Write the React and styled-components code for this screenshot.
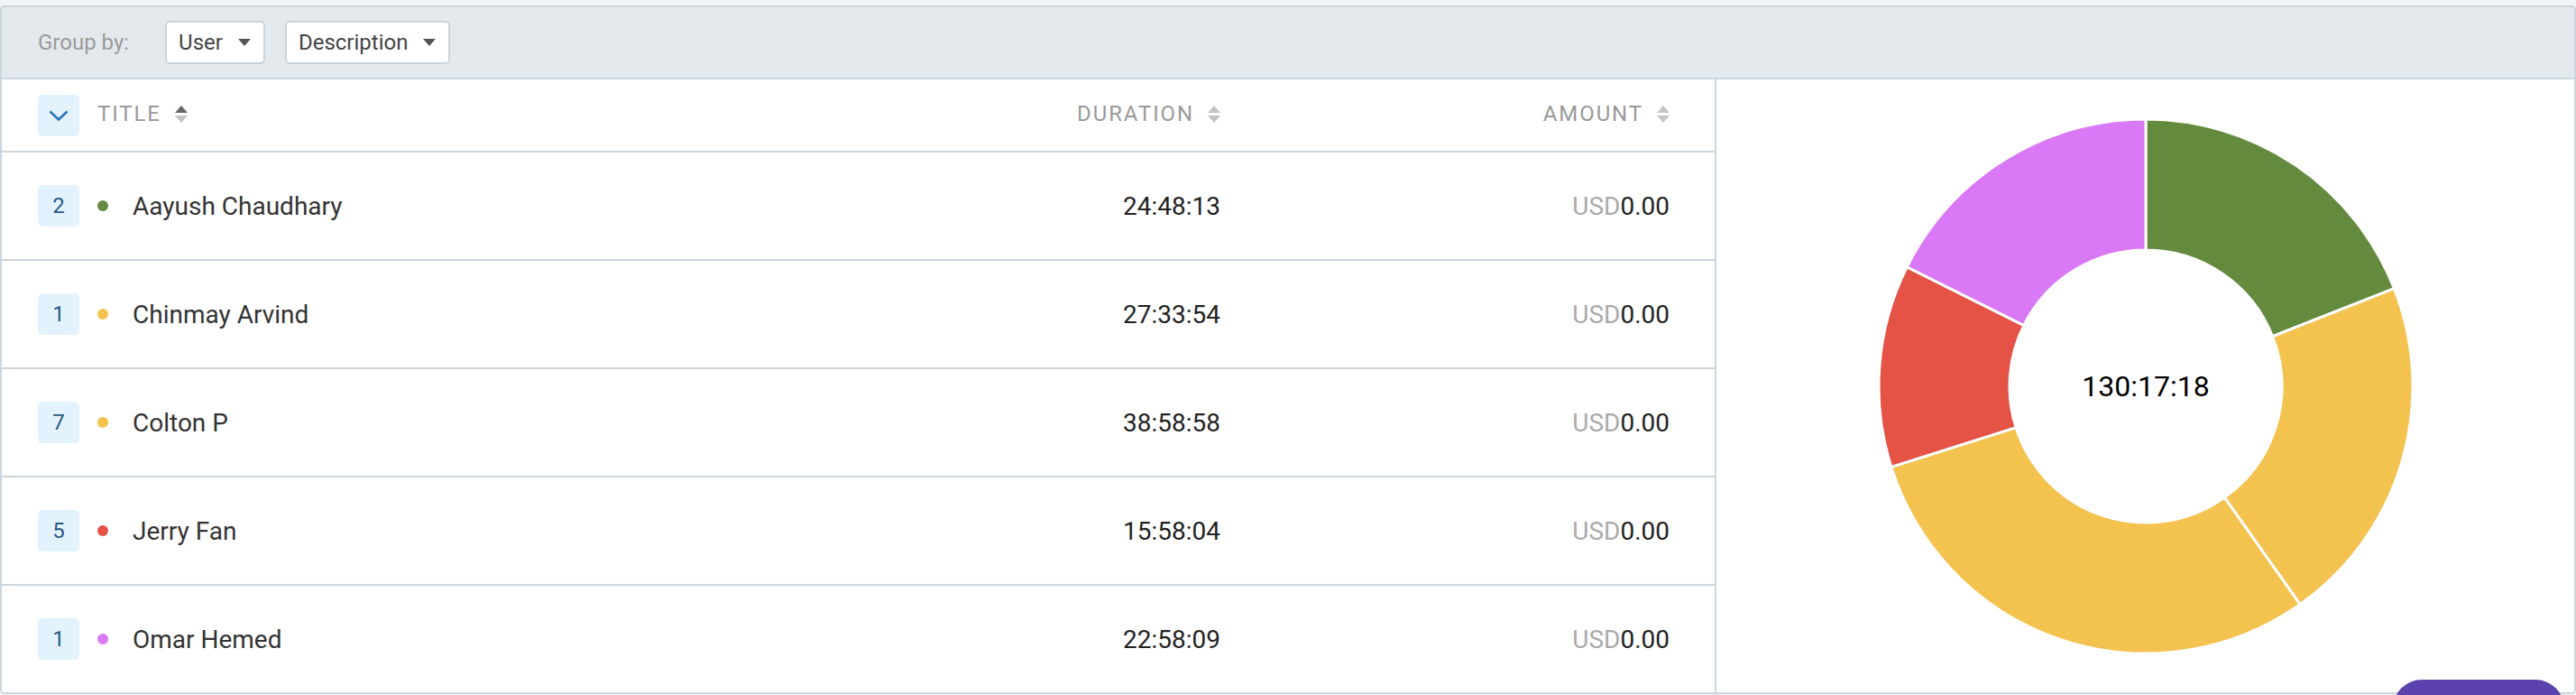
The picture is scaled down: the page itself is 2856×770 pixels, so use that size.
import React from "react";
import styled, { createGlobalStyle } from "styled-components";

const Global = createGlobalStyle`
  html, body { margin: 0; padding: 0; }
  body {
    background: #f2f5f8;
    font-family: Roboto, "Noto Sans", "Liberation Sans", sans-serif;
    padding-top: 6px;
    overflow: hidden;
  }
  * { box-sizing: border-box; }
`;

const Card = styled.div`
  border: 2px solid #cbd5dd;
  border-radius: 5px;
  background: #fff;
  overflow: hidden;
`;

const Toolbar = styled.div`
  height: 80px;
  background: #e4e9ed;
  border-bottom: 2px solid #cbd5dd;
  display: flex;
  align-items: center;
  padding-left: 40px;
`;

const ToolbarLabel = styled.span`
  font-size: 24px;
  color: #9a9a9a;
  margin-right: 40px;
`;

const Dropdown = styled.div`
  height: 48px;
  display: flex;
  align-items: center;
  gap: 17px;
  padding: 0 14px 0 13px;
  background: #fff;
  border: 2px solid #c9d3db;
  border-radius: 5px;
  font-size: 24px;
  color: #444;
  margin-right: 22px;
`;

const Caret = styled.span`
  width: 0;
  height: 0;
  border-left: 7px solid transparent;
  border-right: 7px solid transparent;
  border-top: 8px solid #555;
`;

const Body = styled.div`
  display: flex;
`;

const TablePanel = styled.div`
  width: 1901px;
  flex: none;
  border-right: 2px solid #cbd5dd;
`;

const Row = styled.div`
  display: grid;
  grid-template-columns: 1fr 420px 498px;
  align-items: center;
  padding: 0 50px 0 40px;
  height: ${(p) => (p.$header ? "79px" : "118px")};
  border-bottom: ${(p) => (p.$last ? "none" : "2px solid #cbd5dd")};
  box-sizing: content-box;
`;

const TitleCell = styled.div`
  display: flex;
  align-items: center;
`;

const NumCell = styled.div`
  display: flex;
  align-items: center;
  justify-content: flex-end;
  font-size: 28px;
  color: #222;
`;

const HeadText = styled.span`
  font-size: 24px;
  letter-spacing: 1.9px;
  color: #999;
  text-transform: uppercase;
  margin-bottom: 3px;
`;

const SortIcon = styled.span`
  display: inline-flex;
  flex-direction: column;
  gap: 3px;
  margin-left: 15px;
  margin-bottom: 3px;
  &::before, &::after {
    content: "";
    width: 0;
    height: 0;
    border-left: 7px solid transparent;
    border-right: 7px solid transparent;
  }
  &::before {
    border-bottom: 8px solid ${(p) => (p.$active ? "#666" : "#c4c4c4")};
  }
  &::after {
    border-top: 8px solid #c4c4c4;
  }
`;

const CollapseBtn = styled.div`
  width: 46px;
  height: 46px;
  border-radius: 5px;
  background: #e3f3fd;
  display: flex;
  align-items: center;
  justify-content: center;
  margin-right: 20px;
`;

const Badge = styled.div`
  width: 46px;
  height: 46px;
  border-radius: 5px;
  background: #e3f3fd;
  color: #2b5a85;
  font-size: 24px;
  display: flex;
  align-items: center;
  justify-content: center;
  margin-right: 20px;
`;

const Dot = styled.span`
  width: 12px;
  height: 12px;
  border-radius: 50%;
  background: ${(p) => p.$color};
  margin-right: 27px;
`;

const Name = styled.span`
  font-size: 28px;
  color: #333;
`;

const Currency = styled.span`
  color: #aaa;
`;

const ChartPanel = styled.div`
  flex: 1;
  display: flex;
  align-items: center;
  justify-content: center;
`;

const ChatButton = styled.div`
  position: fixed;
  right: 13px;
  bottom: -47px;
  width: 190px;
  height: 64px;
  border-radius: 32px;
  background: #5c42ae;
`;

const data = [
  { count: 2, name: "Aayush Chaudhary", duration: "24:48:13", color: "#648a3e" },
  { count: 1, name: "Chinmay Arvind", duration: "27:33:54", color: "#f3c24f" },
  { count: 7, name: "Colton P", duration: "38:58:58", color: "#f3c24f" },
  { count: 5, name: "Jerry Fan", duration: "15:58:04", color: "#e45345" },
  { count: 1, name: "Omar Hemed", duration: "22:58:09", color: "#da79f5" },
];

const toSec = (s) => {
  const [h, m, x] = s.split(":").map(Number);
  return h * 3600 + m * 60 + x;
};

function Donut() {
  const size = 600;
  const cx = 300;
  const cy = 300;
  const R = 296;
  const r = 151;
  const total = data.reduce((a, d) => a + toSec(d.duration), 0);
  const pt = (a, rad) => [cx + rad * Math.sin(a), cy - rad * Math.cos(a)];
  let acc = 0;
  const paths = data.map((d, i) => {
    const a0 = (acc / total) * Math.PI * 2;
    acc += toSec(d.duration);
    const a1 = (acc / total) * Math.PI * 2;
    const large = a1 - a0 > Math.PI ? 1 : 0;
    const [x0, y0] = pt(a0, R);
    const [x1, y1] = pt(a1, R);
    const [x2, y2] = pt(a1, r);
    const [x3, y3] = pt(a0, r);
    const dpath = `M${x0} ${y0} A${R} ${R} 0 ${large} 1 ${x1} ${y1} L${x2} ${y2} A${r} ${r} 0 ${large} 0 ${x3} ${y3} Z`;
    return <path key={i} d={dpath} fill={d.color} stroke="#fff" strokeWidth="3" strokeLinejoin="miter" />;
  });
  return (
    <svg width={size} height={size} viewBox={`0 0 ${size} ${size}`}>
      {paths}
      <text
        x={cx}
        y={cy}
        textAnchor="middle"
        dominantBaseline="central"
        fontFamily="Roboto, sans-serif"
        fontSize="32"
        fill="#000"
      >
        130:17:18
      </text>
    </svg>
  );
}

export default function App() {
  return (
    <>
      <Global />
      <Card>
        <Toolbar>
          <ToolbarLabel>Group by:</ToolbarLabel>
          <Dropdown>
            User <Caret />
          </Dropdown>
          <Dropdown>
            Description <Caret />
          </Dropdown>
        </Toolbar>
        <Body>
          <TablePanel>
            <Row $header>
              <TitleCell>
                <CollapseBtn>
                  <svg width="22" height="12" viewBox="0 0 22 12">
                    <polyline points="1.5,1.5 11,10.5 20.5,1.5" fill="none" stroke="#2d73b8" strokeWidth="2.6" />
                  </svg>
                </CollapseBtn>
                <HeadText>Title</HeadText>
                <SortIcon $active />
              </TitleCell>
              <NumCell>
                <HeadText>Duration</HeadText>
                <SortIcon />
              </NumCell>
              <NumCell>
                <HeadText>Amount</HeadText>
                <SortIcon />
              </NumCell>
            </Row>
            {data.map((d, i) => (
              <Row key={d.name} $last={i === data.length - 1}>
                <TitleCell>
                  <Badge>{d.count}</Badge>
                  <Dot $color={d.color} />
                  <Name>{d.name}</Name>
                </TitleCell>
                <NumCell>{d.duration}</NumCell>
                <NumCell>
                  <Currency>USD</Currency>0.00
                </NumCell>
              </Row>
            ))}
          </TablePanel>
          <ChartPanel>
            <Donut />
          </ChartPanel>
        </Body>
      </Card>
      <ChatButton />
    </>
  );
}
